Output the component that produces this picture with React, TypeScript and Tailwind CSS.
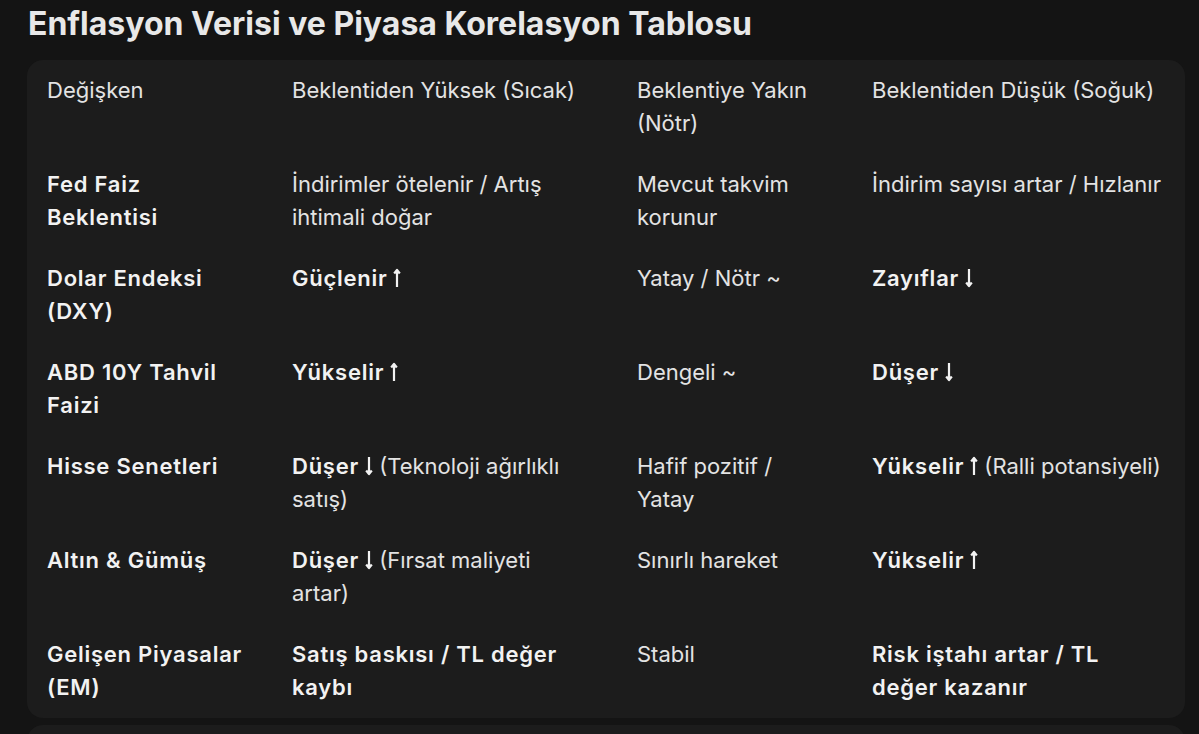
const Up = () => (
  <svg viewBox="0 0 8 20" className="inline-block w-[8px] h-[20px] align-[-2px] ml-[6px]" fill="none" stroke="currentColor" strokeWidth={2.2}>
    <path d="M4 19V2M1.2 5.5L4 1.8L6.8 5.5" strokeLinejoin="round" />
  </svg>
);
const Down = () => (
  <svg viewBox="0 0 8 20" className="inline-block w-[8px] h-[20px] align-[-2px] ml-[6px]" fill="none" stroke="currentColor" strokeWidth={2.2}>
    <path d="M4 1V18M1.2 14.5L4 18.2L6.8 14.5" strokeLinejoin="round" />
  </svg>
);

const B = ({ children }: { children: React.ReactNode }) => (
  <b className="font-semibold tracking-[0.75px] text-[#f2f2f2]">{children}</b>
);

const rows: { label: React.ReactNode; hot: React.ReactNode; neutral: React.ReactNode; cold: React.ReactNode }[] = [
  {
    label: <>Fed Faiz<br />Beklentisi</>,
    hot: <>İndirimler ötelenir / Artış<br />ihtimali doğar</>,
    neutral: <>Mevcut takvim<br />korunur</>,
    cold: 'İndirim sayısı artar / Hızlanır',
  },
  {
    label: <>Dolar Endeksi<br />(DXY)</>,
    hot: <B>Güçlenir<Up /></B>,
    neutral: 'Yatay / Nötr ~',
    cold: <B>Zayıflar<Down /></B>,
  },
  {
    label: <>ABD 10Y Tahvil<br />Faizi</>,
    hot: <B>Yükselir<Up /></B>,
    neutral: 'Dengeli ~',
    cold: <B>Düşer<Down /></B>,
  },
  {
    label: 'Hisse Senetleri',
    hot: (
      <>
        <B>Düşer<Down /></B> (Teknoloji ağırlıklı<br />satış)
      </>
    ),
    neutral: <>Hafif pozitif /<br />Yatay</>,
    cold: (
      <>
        <B>Yükselir<Up /></B> (Ralli potansiyeli)
      </>
    ),
  },
  {
    label: 'Altın & Gümüş',
    hot: (
      <>
        <B>Düşer<Down /></B> (Fırsat maliyeti<br />artar)
      </>
    ),
    neutral: 'Sınırlı hareket',
    cold: <B>Yükselir<Up /></B>,
  },
  {
    label: <>Gelişen Piyasalar<br />(EM)</>,
    hot: <B>Satış baskısı / TL değer<br />kaybı</B>,
    neutral: 'Stabil',
    cold: <B>Risk iştahı artar / TL<br />değer kazanır</B>,
  },
];

const cell = 'pl-5 pr-1 py-[14px] min-h-[94px] whitespace-nowrap';

export default function App() {
  return (
    <div
      className="h-screen overflow-hidden bg-[#141414] text-[#e3e3e3] pl-[27px] pr-[14px]"
      style={{ fontFamily: 'Inter, Roboto, "Noto Sans", sans-serif' }}
    >
      <h1 className="pt-[6px] pl-px mb-[18px] text-[32px] leading-[36px] font-bold text-[#e8e8e8]">
        Enflasyon Verisi ve Piyasa Korelasyon Tablosu
      </h1>

      <div className="rounded-2xl bg-[#1c1c1c] text-[22px] leading-[33px]">
        <div className="grid grid-cols-[245px_345px_235px_1fr]">
          <div className={cell}>Değişken</div>
          <div className={cell}>Beklentiden Yüksek (Sıcak)</div>
          <div className={cell}>
            Beklentiye Yakın
            <br />
            (Nötr)
          </div>
          <div className={cell}>Beklentiden Düşük (Soğuk)</div>

          {rows.map((r, i) => (
            <div key={i} className="contents">
              <div className={cell}>
                <B>{r.label}</B>
              </div>
              <div className={cell}>{r.hot}</div>
              <div className={cell}>{r.neutral}</div>
              <div className={cell}>{r.cold}</div>
            </div>
          ))}
        </div>
      </div>

      {/* next block, cut off by the window */}
      <div className="mt-[7px] h-10 rounded-t-2xl bg-[#1c1c1c]" />
    </div>
  );
}
